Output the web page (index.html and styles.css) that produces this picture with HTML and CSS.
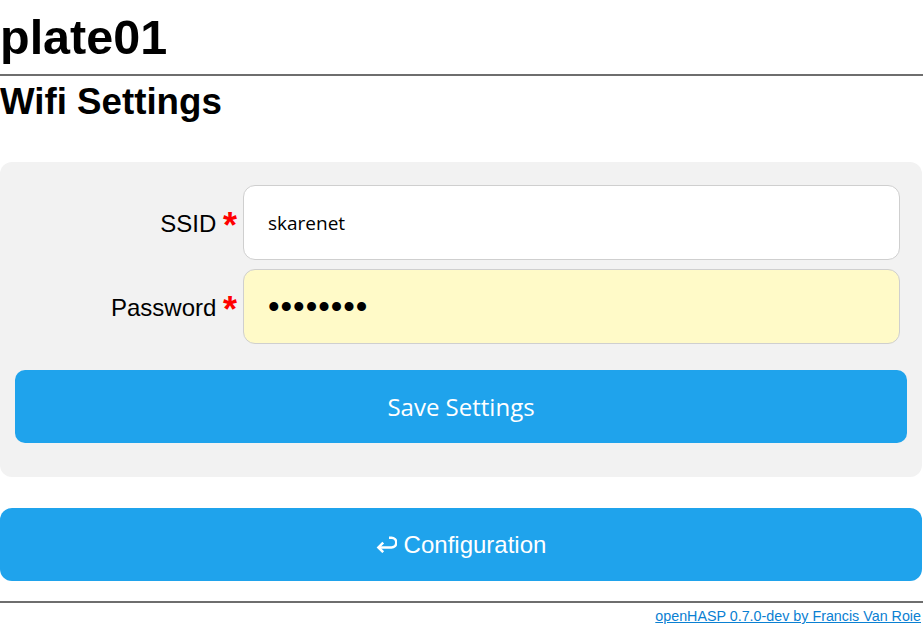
FILE: index.html
```html
<!DOCTYPE html>
<html lang="en">
<head>
<meta charset="utf-8">
<title>plate01 - Wifi Settings</title>
<link rel="stylesheet" href="styles.css">
</head>
<body>
<h1 class="title">plate01</h1>
<hr class="rule">
<h2 class="subtitle">Wifi Settings</h2>
<form class="panel">
  <div class="row">
    <label class="label" for="ssid">SSID <span class="req">*</span></label>
    <input class="field" id="ssid" type="text" value="skarenet">
  </div>
  <div class="row">
    <label class="label" for="pass">Password <span class="req">*</span></label>
    <input class="field field-pw" id="pass" type="password" value="12345678">
  </div>
  <button class="btn btn-save" type="button">Save Settings</button>
</form>
<button class="btn btn-cfg" type="button"><svg class="icon" width="21" height="17" viewBox="0 0 21 17" aria-hidden="true"><path d="M13 1.8 H15.5 A4.8 4.8 0 0 1 15.5 11.4 H2.5" fill="none" stroke="#fff" stroke-width="2.5"/><path d="M7.2 6.6 L2.4 11.4 L7.2 16.2" fill="none" stroke="#fff" stroke-width="2.5"/></svg><span>Configuration</span></button>
<hr class="rule rule-bottom">
<div class="footer"><a class="footer-link" href="#">openHASP 0.7.0-dev by Francis Van Roie</a></div>
</body>
</html>
```
FILE: styles.css
```css
html, body {
  margin: 0;
  padding: 0;
  background: #fff;
}
body {
  width: 923px;
  font-family: "Liberation Sans", Arial, sans-serif;
  font-size: 24px;
  color: #000;
}
.title {
  margin: 10px 0 0;
  font-size: 48.5px;
  line-height: 55px;
  font-weight: bold;
}
.rule {
  margin: 9px 0 0;
  height: 0;
  border: 0;
  border-top: 2px solid #6e6e6e;
}
.subtitle {
  margin: 5px 0 0;
  font-size: 36.7px;
  line-height: 41px;
  font-weight: bold;
}
.panel {
  margin: 40px 0 0;
  width: 922px;
  box-sizing: border-box;
  background: #f2f2f2;
  border-radius: 12px;
  padding: 23px 15px 34px;
  display: flex;
  flex-direction: column;
}
.row {
  display: flex;
  align-items: center;
  margin-bottom: 9px;
}
.label {
  width: 222px;
  padding-right: 6px;
  text-align: right;
  font-size: 24px;
  white-space: nowrap;
  position: relative;
  top: 1px;
}
.req {
  color: #f00;
  font-size: 36px;
  font-weight: bold;
  line-height: 0;
  position: relative;
  top: 6px;
}
.field {
  width: 657px;
  height: 75px;
  box-sizing: border-box;
  border: 1px solid #cfcfcf;
  border-radius: 12px;
  background: #fff;
  padding: 0 24px;
  font-family: "Open Sans", sans-serif;
  font-size: 19px;
  color: #000;
  outline: none;
}
.field-pw {
  background: #fffac8;
  font-family: "Liberation Sans", sans-serif;
  font-size: 33px;
  letter-spacing: 1px;
}
.btn {
  border: 0;
  background: #1fa3ec;
  color: #fff;
  cursor: pointer;
  display: flex;
  align-items: center;
  justify-content: center;
}
.btn-save {
  margin-top: 17px;
  height: 73px;
  border-radius: 10px;
  font-family: "Open Sans", sans-serif;
  font-size: 24px;
}
.btn-cfg {
  margin-top: 31px;
  width: 922px;
  height: 73px;
  border-radius: 12px;
  font-family: "Liberation Sans", Arial, sans-serif;
  font-size: 24px;
  gap: 7px;
}
.icon {
  display: block;
}
.rule-bottom {
  margin-top: 20px;
}
.footer {
  text-align: right;
  padding-right: 2px;
  margin-top: 2px;
  line-height: 16px;
}
.footer-link {
  font-size: 14.3px;
  color: #0a80d2;
}
```
